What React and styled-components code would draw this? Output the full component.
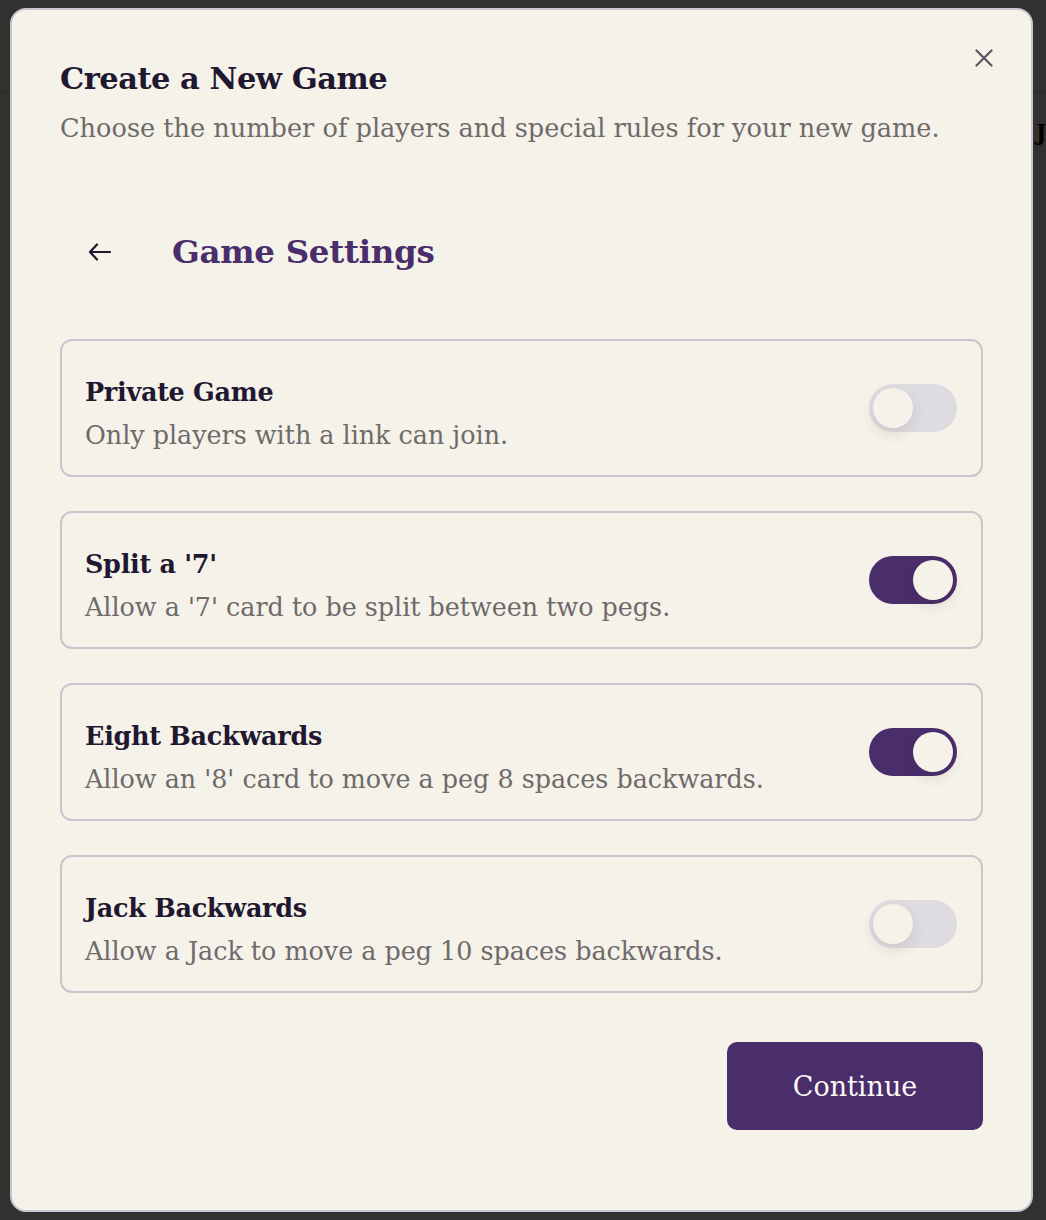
import React, { useState } from 'react';
import styled, { createGlobalStyle } from 'styled-components';

const Global = createGlobalStyle`
  * { box-sizing: border-box; }
  body {
    margin: 0;
    background: #f5f2ea;
    font-family: "DejaVu Serif", "Liberation Serif", serif;
  }
`;

const purple = '#4a2d6b';
const cream = '#f5f2ea';
const ink = '#1f1830';
const muted = '#6e6a69';

const Page = styled.div`
  height: 1220px;
  overflow: hidden;
`;

const PageHeader = styled.header`
  height: 93px;
  border-bottom: 1px solid #d6d2ca;
`;

const PageLine = styled.div`
  padding: 26px 0 0 1036px;
  font-size: 22px;
  line-height: 26px;
  font-weight: 700;
  color: #000;
`;

const Backdrop = styled.div`
  position: fixed;
  inset: 0;
  background: rgba(0, 0, 0, 0.8);
  display: flex;
  align-items: flex-start;
  padding: 8px 13px 8px 10px;
`;

const Modal = styled.div`
  position: relative;
  width: 1024px;
  background: ${cream};
  border: 2px solid #c9c4cf;
  border-radius: 16px;
  padding: 50px 48px 80px;
  display: flex;
  flex-direction: column;
`;

const CloseButton = styled.button`
  position: absolute;
  top: 30px;
  right: 29px;
  width: 36px;
  height: 36px;
  padding: 0;
  border: 0;
  background: none;
  display: flex;
  align-items: center;
  justify-content: center;
  color: #5a5662;
  cursor: pointer;
`;

const Title = styled.h2`
  margin: 0;
  font-size: 30.5px;
  line-height: 36px;
  font-weight: 700;
  color: ${ink};
  letter-spacing: -0.5px;
`;

const Subtitle = styled.p`
  margin: 14px 0 0;
  font-size: 25.6px;
  line-height: 36px;
  color: ${muted};
`;

const SectionHead = styled.div`
  margin-top: 82px;
  height: 48px;
  display: flex;
  align-items: center;
  gap: 48px;
  padding-left: 16px;
`;

const BackButton = styled.button`
  width: 48px;
  height: 48px;
  padding: 0;
  border: 0;
  background: none;
  display: flex;
  align-items: center;
  justify-content: center;
  color: ${ink};
  cursor: pointer;
`;

const SectionTitle = styled.h3`
  margin: 0;
  font-size: 32.5px;
  line-height: 40px;
  font-weight: 700;
  color: ${purple};
  letter-spacing: -0.3px;
`;

const List = styled.div`
  margin-top: 63px;
  display: flex;
  flex-direction: column;
  gap: 34px;
`;

const Card = styled.label`
  display: flex;
  align-items: center;
  justify-content: space-between;
  border: 2px solid #c9c5cd;
  border-radius: 12px;
  padding: 34px 24px 23px 23px;
  cursor: pointer;
`;

const CardText = styled.div`
  display: flex;
  flex-direction: column;
  gap: 9px;
`;

const CardTitle = styled.span`
  font-size: 25.5px;
  line-height: 34px;
  font-weight: 700;
  color: ${ink};
  letter-spacing: -0.3px;
`;

const CardDesc = styled.span`
  font-size: 25.4px;
  line-height: 34px;
  color: ${muted};
`;

const Track = styled.button`
  flex: none;
  margin-top: -11px;
  width: 88px;
  height: 48px;
  padding: 4px;
  border: 0;
  border-radius: 24px;
  background: ${(p) => (p.$on ? purple : '#dfdce1')};
  display: flex;
  justify-content: ${(p) => (p.$on ? 'flex-end' : 'flex-start')};
  cursor: pointer;
`;

const Knob = styled.span`
  width: 40px;
  height: 40px;
  border-radius: 50%;
  background: ${cream};
  box-shadow: 0 6px 14px rgba(60, 50, 40, 0.12);
`;

const Footer = styled.div`
  margin-top: 49px;
  display: flex;
  justify-content: flex-end;
`;

const PrimaryButton = styled.button`
  width: 256px;
  height: 88px;
  border: 0;
  border-radius: 10px;
  background: ${purple};
  color: #fbf9f4;
  font-family: inherit;
  font-size: 27px;
  line-height: 1;
  padding-top: 2px;
  cursor: pointer;
`;

const settings = [
  { id: 'private', title: 'Private Game', desc: 'Only players with a link can join.', on: false },
  { id: 'split7', title: "Split a '7'", desc: "Allow a '7' card to be split between two pegs.", on: true },
  { id: 'eight', title: 'Eight Backwards', desc: "Allow an '8' card to move a peg 8 spaces backwards.", on: true },
  { id: 'jack', title: 'Jack Backwards', desc: 'Allow a Jack to move a peg 10 spaces backwards.', on: false },
];

const CloseIcon = () => (
  <svg width="18" height="18" viewBox="0 0 18 18" fill="none" stroke="currentColor" strokeWidth="2.2" strokeLinecap="round">
    <path d="M1.5 1.5l15 15M16.5 1.5l-15 15" />
  </svg>
);

const BackIcon = () => (
  <svg width="24" height="18" viewBox="0 0 24 18" fill="none" stroke="currentColor" strokeWidth="2.2" strokeLinecap="round" strokeLinejoin="round">
    <path d="M22 9H2M9 1.5L2 9l7 7.5" />
  </svg>
);

export default function App() {
  const [values, setValues] = useState(() =>
    Object.fromEntries(settings.map((s) => [s.id, s.on]))
  );

  const flip = (id) => setValues((v) => ({ ...v, [id]: !v[id] }));

  return (
    <Page>
      <Global />
      <PageHeader />
      <PageLine>J</PageLine>
      <Backdrop>
        <Modal role="dialog" aria-modal="true">
          <CloseButton aria-label="Close">
            <CloseIcon />
          </CloseButton>
          <Title>Create a New Game</Title>
          <Subtitle>Choose the number of players and special rules for your new game.</Subtitle>

          <SectionHead>
            <BackButton aria-label="Back">
              <BackIcon />
            </BackButton>
            <SectionTitle>Game Settings</SectionTitle>
          </SectionHead>

          <List>
            {settings.map((s) => (
              <Card key={s.id}>
                <CardText>
                  <CardTitle>{s.title}</CardTitle>
                  <CardDesc>{s.desc}</CardDesc>
                </CardText>
                <Track
                  type="button"
                  role="switch"
                  aria-checked={values[s.id]}
                  $on={values[s.id]}
                  onClick={() => flip(s.id)}
                >
                  <Knob />
                </Track>
              </Card>
            ))}
          </List>

          <Footer>
            <PrimaryButton>Continue</PrimaryButton>
          </Footer>
        </Modal>
      </Backdrop>
    </Page>
  );
}
